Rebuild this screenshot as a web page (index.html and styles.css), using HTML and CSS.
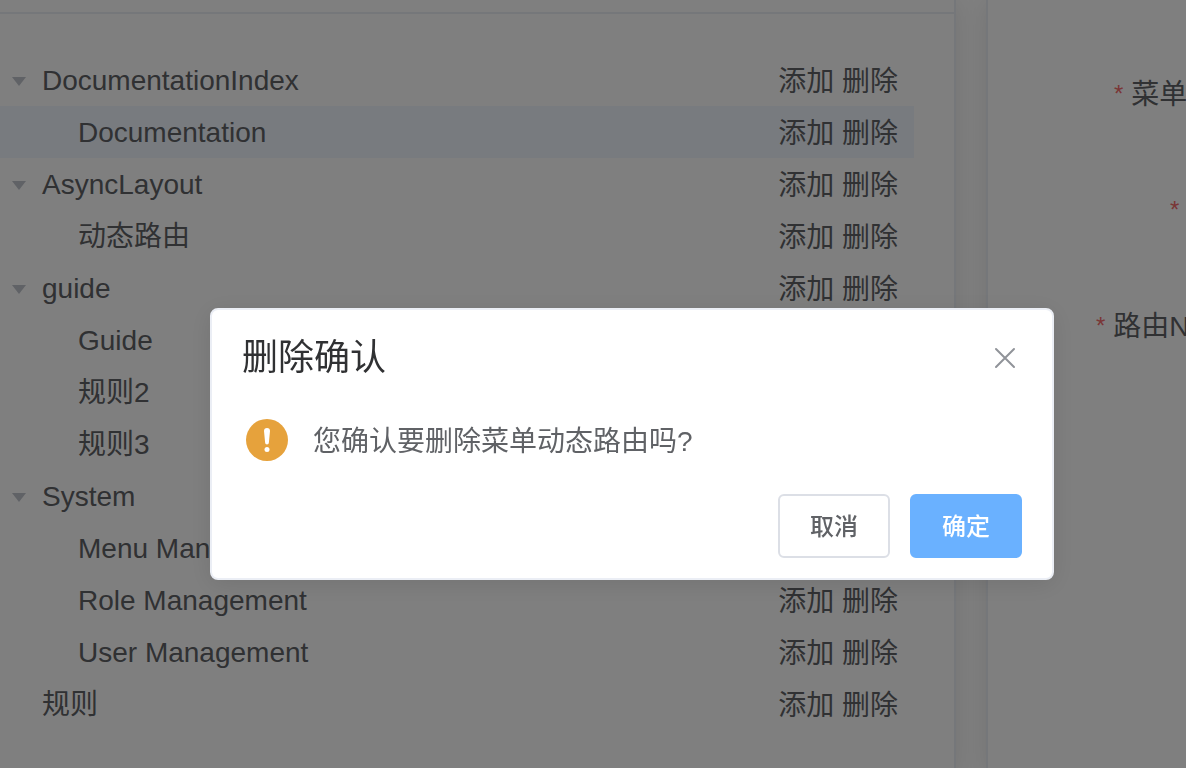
FILE: index.html
```html
<!DOCTYPE html>
<html lang="zh-CN">
<head>
  <meta charset="UTF-8" />
  <meta name="viewport" content="width=device-width, initial-scale=1.0"/>
  <title>删除确认</title>
  <link rel="stylesheet" href="styles.css">
</head>
<body>

  <div class="page">
    <main class="card">
      <div class="card-header"></div>
      <ul class="tree">
        <li class="node parent">
          <span class="caret"></span>
          <span class="name">DocumentationIndex</span>
          <span class="actions"><button>添加</button> <button>删除</button></span>
        </li>
        <li class="node child current">
          <span class="name">Documentation</span>
          <span class="actions"><button>添加</button> <button>删除</button></span>
        </li>
        <li class="node parent">
          <span class="caret"></span>
          <span class="name">AsyncLayout</span>
          <span class="actions"><button>添加</button> <button>删除</button></span>
        </li>
        <li class="node child">
          <span class="name">动态路由</span>
          <span class="actions"><button>添加</button> <button>删除</button></span>
        </li>
        <li class="node parent">
          <span class="caret"></span>
          <span class="name">guide</span>
          <span class="actions"><button>添加</button> <button>删除</button></span>
        </li>
        <li class="node child">
          <span class="name">Guide</span>
        </li>
        <li class="node child">
          <span class="name">规则2</span>
        </li>
        <li class="node child">
          <span class="name">规则3</span>
        </li>
        <li class="node parent">
          <span class="caret"></span>
          <span class="name">System</span>
        </li>
        <li class="node child">
          <span class="name">Menu Man</span>
        </li>
        <li class="node child">
          <span class="name">Role Management</span>
          <span class="actions"><button>添加</button> <button>删除</button></span>
        </li>
        <li class="node child">
          <span class="name">User Management</span>
          <span class="actions"><button>添加</button> <button>删除</button></span>
        </li>
        <li class="node leaf">
          <span class="name">规则</span>
          <span class="actions"><button>添加</button> <button>删除</button></span>
        </li>
      </ul>
    </main>

    <aside class="card form">
      <div class="form-item"><span class="star">*</span>菜单</div>
      <div class="form-item short"><span class="star">*</span></div>
      <div class="form-item long"><span class="star">*</span>路由N</div>
    </aside>
  </div>

  <div class="overlay">
    <div class="dialog" role="dialog" aria-modal="true" aria-labelledby="dialog-title">
      <div class="dialog-header">
        <h2 class="dialog-title" id="dialog-title">删除确认</h2>
        <button class="close" aria-label="Close">
          <svg width="22" height="22" viewBox="0 0 22 22" fill="none" stroke="currentColor" stroke-width="2" stroke-linecap="round">
            <path d="M2 2L20 20M20 2L2 20"/>
          </svg>
        </button>
      </div>
      <div class="dialog-content">
        <svg class="warning" width="42" height="42" viewBox="0 0 42 42">
          <circle cx="21" cy="21" r="21" fill="#e6a23c"/>
          <path d="M18 12a3 3 0 0 1 6 0L22.900 23.600a1.900 1.900 0 0 1-3.800 0z" fill="#fff"/>
          <circle cx="21" cy="30.600" r="2.500" fill="#fff"/>
        </svg>
        <p class="message">您确认要删除菜单动态路由吗?</p>
      </div>
      <div class="dialog-footer">
        <button class="btn">取消</button>
        <button class="btn primary">确定</button>
      </div>
    </div>
  </div>

</body>
</html>
```
FILE: styles.css
```css
* {
  box-sizing: border-box;
}

body {
  margin: 0;
  background: #fff;
  color: #606266;
  font-family: "Liberation Sans", "Noto Sans CJK SC", sans-serif;
  font-size: 28px;
  overflow: hidden;
}

button {
  font: inherit;
  color: inherit;
  background: none;
  border: none;
  padding: 0;
  cursor: pointer;
}

.page {
  display: grid;
  grid-template-columns: minmax(0, 1fr) 200px;
  gap: 30px;
  min-height: 100vh;
}

.card {
  background: #fff;
  border-right: 2px solid #ebeef5;
  box-shadow: 0 4px 24px rgba(0, 0, 0, 0.1);
}

.card-header {
  height: 14px;
  border-bottom: 2px solid #ebeef5;
}

.tree {
  list-style: none;
  margin: 0;
  padding: 40px 40px 40px 0;
}

.node {
  display: flex;
  align-items: center;
  height: 52px;
  line-height: 50px;
  padding-top: 2px;
  padding-right: 16px;
  color: #606266;
}

.parent {
  padding-left: 12px;
}

.child {
  padding-left: 78px;
}

.leaf {
  padding-left: 42px;
}

.current {
  background: #f0f7ff;
}

.caret {
  margin-right: 16px;
  border: 7px solid transparent;
  border-top: 9px solid #c0c4cc;
  border-bottom: none;
}

.actions {
  margin-left: auto;
  padding-top: 2px;
}

.form {
  border-left: 2px solid #ebeef5;
  border-right: none;
  padding-top: 55px;
  overflow: hidden;
}

.form-item {
  height: 80px;
  line-height: 80px;
  margin-bottom: 36px;
  padding-left: 126px;
  white-space: nowrap;
}

.short {
  padding-left: 182px;
}

.long {
  padding-left: 108px;
}

.star {
  color: #f56c6c;
  font-size: 24px;
  line-height: 1;
  vertical-align: 2px;
  margin-right: 8px;
}

.overlay {
  position: fixed;
  inset: 0;
  display: flex;
  align-items: center;
  justify-content: center;
  padding: 120px 0 0 78px;
  background: rgba(0, 0, 0, 0.5);
}

.dialog {
  width: 844px;
  background: #fff;
  border: 2px solid #ebeef5;
  border-radius: 8px;
  box-shadow: 0 4px 24px rgba(0, 0, 0, 0.1);
  padding: 28px 30px 20px;
}

.dialog-header {
  display: flex;
  justify-content: space-between;
  align-items: center;
}

.dialog-title {
  margin: 0;
  font-size: 36px;
  font-weight: normal;
  line-height: 40px;
  color: #303133;
}

.close {
  display: flex;
  margin-right: 6px;
  color: #909399;
}

.dialog-content {
  display: flex;
  align-items: center;
  gap: 25px;
  padding: 38px 4px 30px;
}

.message {
  margin: 0;
  padding-top: 4px;
  line-height: 44px;
}

.dialog-footer {
  display: flex;
  justify-content: flex-end;
  gap: 20px;
}

.btn {
  width: 112px;
  height: 64px;
  padding-bottom: 4px;
  border: 2px solid #dcdfe6;
  border-radius: 6px;
  background: #fff;
  font-size: 24px;
  font-weight: 500;
}

.primary {
  background: #6ab1ff;
  border-color: #6ab1ff;
  color: #fff;
}
```
